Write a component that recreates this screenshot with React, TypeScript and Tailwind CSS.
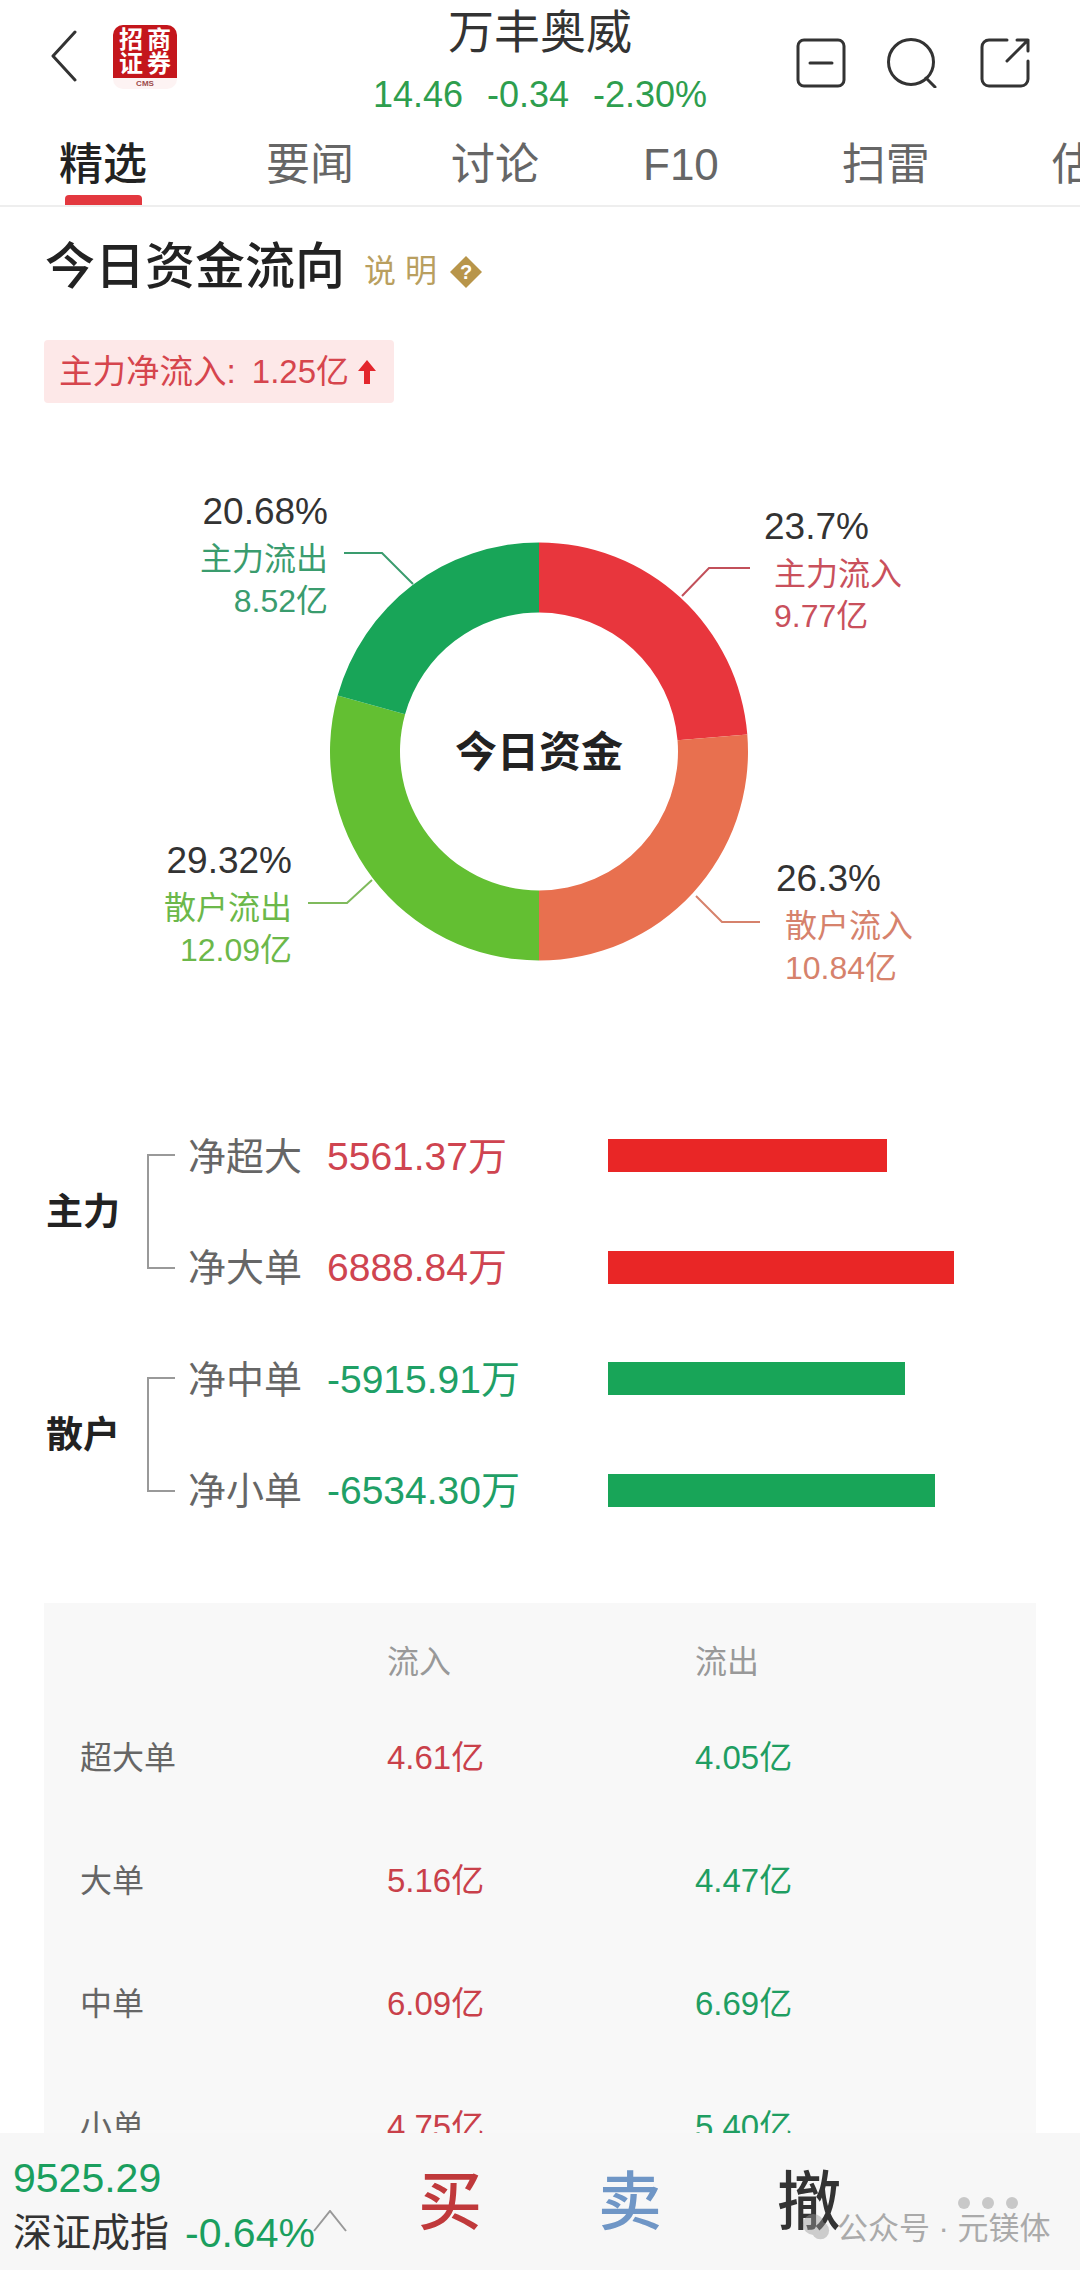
const segments = [
  { pct: 23.7, color: "#e8363d" },
  { pct: 26.3, color: "#e8704f" },
  { pct: 29.32, color: "#63bf32" },
  { pct: 20.68, color: "#18a558" },
];

const leaders = [
  { points: "682,116 709,88 750,88", color: "#c2505a" },
  { points: "413,104 382,73 344,73", color: "#3a9c6e" },
  { points: "696,416 722,442 760,442", color: "#d6826c" },
  { points: "372,400 347,423 308,423", color: "#7fba5c" },
];

const labels = [
  { pos: "right-[752px] top-[12px] items-end", pct: "20.68%", name: "主力流出", amount: "8.52亿", tone: "text-[#3a9c6e]" },
  { pos: "left-[764px] top-[27px] items-start", pct: "23.7%", name: "主力流入", amount: "9.77亿", tone: "text-[#c9505c]", inset: "ml-[10px]" },
  { pos: "right-[788px] top-[361px] items-end", pct: "29.32%", name: "散户流出", amount: "12.09亿", tone: "text-[#6cb84a]" },
  { pos: "left-[776px] top-[379px] items-start", pct: "26.3%", name: "散户流入", amount: "10.84亿", tone: "text-[#d6826c]", inset: "ml-[9px]" },
];

const groups = [
  {
    name: "主力",
    rows: [
      { label: "净超大", value: "5561.37万", tone: "text-[#cf4450]", bar: "bg-[#e92626]", width: 279 },
      { label: "净大单", value: "6888.84万", tone: "text-[#cf4450]", bar: "bg-[#e92626]", width: 346 },
    ],
  },
  {
    name: "散户",
    rows: [
      { label: "净中单", value: "-5915.91万", tone: "text-[#1fa066]", bar: "bg-[#18a558]", width: 297 },
      { label: "净小单", value: "-6534.30万", tone: "text-[#1fa066]", bar: "bg-[#18a558]", width: 327 },
    ],
  },
];

const tableRows = [
  ["超大单", "4.61亿", "4.05亿"],
  ["大单", "5.16亿", "4.47亿"],
  ["中单", "6.09亿", "6.69亿"],
  ["小单", "4.75亿", "5.40亿"],
];

const tabs = [
  { name: "精选", cls: "ml-[59px] text-[#222] font-medium" },
  { name: "要闻", cls: "ml-[119px]" },
  { name: "讨论", cls: "ml-[97px]" },
  { name: "F10", cls: "ml-[104px]" },
  { name: "扫雷", cls: "ml-[123px]" },
  { name: "估值", cls: "ml-[122px]" },
];

function arcPath(start: number, end: number) {
  const cx = 539;
  const cy = 271.5;
  const pt = (r: number, a: number) => {
    const t = (a / 100) * Math.PI * 2;
    return `${cx + r * Math.sin(t)} ${cy - r * Math.cos(t)}`;
  };
  const large = end - start > 50 ? 1 : 0;
  return `M${pt(209, start)} A209 209 0 ${large} 1 ${pt(209, end)} L${pt(139, end)} A139 139 0 ${large} 0 ${pt(139, start)} Z`;
}

function Header() {
  return (
    <header className="relative flex h-[125px] shrink-0 items-start">
      <svg className="ml-[50px] mt-[30px] h-[52px] w-[28px]" viewBox="0 0 28 52" fill="none">
        <path d="M25 2 3 26l22 24" stroke="#333" strokeWidth="3" strokeLinecap="round" strokeLinejoin="round" />
      </svg>
      <div className="ml-[35px] mt-[25px] flex h-[64px] w-[64px] flex-col overflow-hidden rounded-[10px] bg-[#fdf3f3]">
        <div className="grid h-[53px] grid-cols-2 place-items-center bg-[#c4161c] px-[4px] py-[3px] text-[24px] font-bold leading-none text-white">
          <span>招</span>
          <span>商</span>
          <span>证</span>
          <span>券</span>
        </div>
        <div className="flex flex-1 items-center justify-center text-[8px] font-bold leading-none text-[#9c4b4b]">CMS</div>
      </div>
      <div className="absolute left-0 right-0 top-[3px] flex flex-col items-center">
        <div className="text-[46px] leading-[58px] text-[#333]">万丰奥威</div>
        <div className="mt-[13px] flex gap-[24px] text-[36px] leading-[42px] text-[#2e9e4e]">
          <span>14.46</span>
          <span>-0.34</span>
          <span>-2.30%</span>
        </div>
      </div>
      <div className="ml-auto mr-[50px] mt-[38px] flex">
        <svg className="h-[50px] w-[50px]" viewBox="0 0 50 50" fill="none" stroke="#333" strokeWidth="3" strokeLinecap="round">
          <rect x="2" y="2" width="46" height="46" rx="6" />
          <path d="M14 25h22" />
        </svg>
        <svg className="ml-[41px] h-[50px] w-[50px]" viewBox="0 0 50 50" fill="none" stroke="#333" strokeWidth="3" strokeLinecap="round">
          <circle cx="24" cy="24" r="22.5" />
          <path d="M39 40l9 9" />
        </svg>
        <svg className="ml-[43px] h-[50px] w-[50px]" viewBox="0 0 50 50" fill="none" stroke="#333" strokeWidth="3" strokeLinecap="round" strokeLinejoin="round">
          <path d="M27 2H9a7 7 0 0 0-7 7v32a7 7 0 0 0 7 7h32a7 7 0 0 0 7-7V23" />
          <path d="M27 23 48 2M37 2h11v11" />
        </svg>
      </div>
    </header>
  );
}

function Tabs() {
  return (
    <nav className="relative flex h-[82px] shrink-0 items-center overflow-hidden whitespace-nowrap border-b-2 border-[#eeeeee] text-[44px] leading-[56px] text-[#666]">
      {tabs.map((t) => (
        <span key={t.name} className={t.cls}>
          {t.name}
        </span>
      ))}
      <span className="absolute bottom-0 left-[65px] h-[10px] w-[77px] rounded-t-[4px] bg-[#e3383f]" />
    </nav>
  );
}

function Donut() {
  let acc = 0;
  return (
    <div className="relative mt-[77px] h-[620px] w-[1080px]">
      <svg className="absolute inset-0 h-full w-full" viewBox="0 0 1080 620" fill="none">
        {segments.map((s) => {
          const d = arcPath(acc, acc + s.pct);
          acc += s.pct;
          return <path key={s.color} d={d} fill={s.color} />;
        })}
        {leaders.map((l) => (
          <polyline key={l.points} points={l.points} stroke={l.color} strokeWidth="2" />
        ))}
      </svg>
      <div className="absolute left-[339px] top-[245px] w-[400px] text-center text-[42px] font-bold leading-[56px] text-[#222]">今日资金</div>
      {labels.map((l) => (
        <div key={l.name} className={`absolute flex flex-col ${l.pos}`}>
          <span className="text-[37px] leading-[40px] text-[#333]">{l.pct}</span>
          <span className={`mt-[6px] text-[32px] leading-[42px] ${l.tone} ${l.inset ?? ""}`}>{l.name}</span>
          <span className={`text-[32px] leading-[42px] ${l.tone} ${l.inset ?? ""}`}>{l.amount}</span>
        </div>
      ))}
    </div>
  );
}

function NetFlows() {
  return (
    <div className="flex flex-col">
      {groups.map((g) => (
        <div key={g.name} className="flex items-center">
          <div className="ml-[46px] mt-[3px] w-[101px] text-[37px] font-bold leading-[48px] text-[#222]">{g.name}</div>
          <div className="h-[115px] w-[28px] border-y-2 border-l-2 border-[#999]" />
          <div className="ml-[13px] flex flex-col">
            {g.rows.map((r) => (
              <div key={r.label} className="flex h-[111.5px] items-center">
                <span className="w-[139px] pt-[2px] text-[38px] leading-[48px] text-[#666]">{r.label}</span>
                <span className={`w-[281px] pt-[2px] text-[39px] leading-[48px] ${r.tone}`}>{r.value}</span>
                <div className={`h-[33px] ${r.bar}`} style={{ width: r.width }} />
              </div>
            ))}
          </div>
        </div>
      ))}
    </div>
  );
}

function FlowTable() {
  return (
    <div className="mx-[44px] mt-[57px] bg-[#f8f8f8] pl-[36px]">
      <div className="grid h-[93px] grid-cols-[307px_308px_1fr] items-center pt-[24px] text-[32px] leading-[40px] text-[#999]">
        <span />
        <span>流入</span>
        <span>流出</span>
      </div>
      {tableRows.map((row) => (
        <div key={row[0]} className="grid h-[123px] grid-cols-[307px_308px_1fr] items-center text-[33px] leading-[44px]">
          <span className="text-[32px] text-[#666]">{row[0]}</span>
          <span className="text-[#c9404a]">{row[1]}</span>
          <span className="text-[#1f9e62]">{row[2]}</span>
        </div>
      ))}
    </div>
  );
}

function BottomBar() {
  return (
    <footer className="relative flex h-[137px] shrink-0 items-start bg-[#f7f7f7]">
      <div className="ml-[13px] mt-[22px] flex flex-col">
        <span className="text-[41px] leading-[46px] text-[#1a9f5e]">9525.29</span>
        <div className="mt-[7px] flex items-center whitespace-nowrap leading-[50px]">
          <span className="text-[39px] text-[#333]">深证成指</span>
          <span className="ml-[16px] text-[41px] text-[#1a9f5e]">-0.64%</span>
        </div>
      </div>
      <svg className="absolute left-[313px] top-[77px] h-[22px] w-[34px]" viewBox="0 0 34 22" fill="none">
        <path d="M1 21 17 1l16 20" stroke="#999" strokeWidth="2" />
      </svg>
      <div className="absolute left-[418px] top-[27px] text-[64px] font-medium leading-[84px] text-[#c0393b]">买</div>
      <div className="absolute left-[598px] top-[27px] text-[64px] font-medium leading-[84px] text-[#6f96c6]">卖</div>
      <div className="absolute left-[777px] top-[27px] text-[64px] font-medium leading-[84px] text-[#333]">撤</div>
      <svg className="absolute left-[802px] top-[80px] h-[28px] w-[28px]" viewBox="0 0 32 32" fill="#999" opacity="0.45">
        <circle cx="13" cy="13" r="12" />
        <circle cx="21" cy="20" r="10" />
      </svg>
      <svg className="absolute left-[957px] top-[63px] h-[14px] w-[62px]" viewBox="0 0 62 14" fill="#c8c8c8">
        <circle cx="7" cy="7" r="6" />
        <circle cx="31" cy="7" r="6" />
        <circle cx="55" cy="7" r="6" />
      </svg>
      <div className="absolute left-[837px] top-[74px] whitespace-nowrap text-[31px] leading-[44px] text-[#aaa]">公众号 · 元镁体</div>
    </footer>
  );
}

export default function App() {
  return (
    <div className="flex h-[2270px] w-[1080px] flex-col overflow-hidden bg-white font-['Liberation_Sans','Noto_Sans_CJK_SC',sans-serif]">
      <Header />
      <Tabs />
      <main className="min-h-0 flex-1 overflow-hidden">
        <div className="ml-[45px] mt-[30px] flex h-[60px] items-center">
          <h1 className="text-[50px] font-medium leading-[60px] text-[#222]">今日资金流向</h1>
          <span className="ml-[19px] mt-[8px] text-[32px] leading-[40px] tracking-[9px] text-[#b99f5f]">说明</span>
          <svg className="ml-[4px] mt-[10px] h-[32px] w-[32px]" viewBox="0 0 32 32">
            <path d="M16 0 32 16 16 32 0 16Z" fill="#b8954a" />
            <text x="16" y="23" textAnchor="middle" fontSize="20" fontWeight="700" fill="#fff">?</text>
          </svg>
        </div>
        <div className="ml-[44px] mt-[43px] flex h-[63px] w-[350px] items-center rounded-[4px] bg-[#fde8e8] pl-[15px]">
          <span className="whitespace-nowrap text-[33.5px] leading-[40px] text-[#d6454d]">主力净流入:</span>
          <span className="ml-[16px] whitespace-nowrap text-[33px] leading-[40px] text-[#d6454d]">1.25亿</span>
          <svg className="ml-[8px] h-[24px] w-[20px]" viewBox="0 0 20 24" fill="#e3262c">
            <path d="M10 0 19 11h-6v13H7V11H1Z" />
          </svg>
        </div>
        <Donut />
        <NetFlows />
        <FlowTable />
      </main>
      <BottomBar />
    </div>
  );
}
